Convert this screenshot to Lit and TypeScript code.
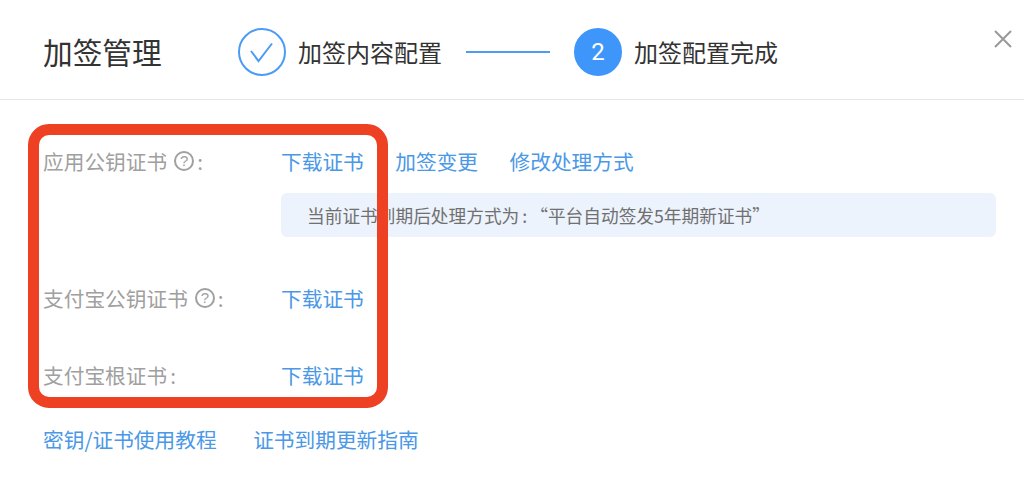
import { LitElement, html, css } from "lit";
import { customElement } from "lit/decorators.js";

@customElement("app-root")
export class AppRoot extends LitElement {
  static styles = css`
    :host {
      display: block;
      position: relative;
      width: 1024px;
      height: 504px;
      overflow: hidden;
      background: #fff;
      font-family: "Noto Sans CJK SC", "Liberation Sans", sans-serif;
      color: #333;
    }
    .header {
      box-sizing: border-box;
      height: 100px;
      border-bottom: 1px solid #e8e8e8;
      display: flex;
      align-items: center;
      padding: 5px 12px 0 43px;
    }
    .title {
      width: 195px;
      font-size: 29.7px;
      line-height: 38px;
      color: #333;
    }
    .step {
      display: flex;
      align-items: center;
      gap: 12px;
      font-size: 24px;
      line-height: 34px;
    }
    .circle {
      box-sizing: border-box;
      width: 48px;
      height: 48px;
      border-radius: 50%;
      border: 2px solid #4c9bf5;
      display: flex;
      align-items: center;
      justify-content: center;
    }
    .circle.on {
      background: #3f96fa;
      border-color: #3f96fa;
      color: #fff;
      font-family: "Roboto", sans-serif;
      font-size: 24px;
    }
    .line {
      width: 84px;
      height: 2px;
      background: #4c9bf5;
      margin: 0 24px 0 24px;
    }
    .close {
      margin-left: auto;
      align-self: flex-start;
      margin-top: 25px;
      display: block;
    }
    .body {
      padding: 45px 28px 0 43px;
    }
    .row {
      display: grid;
      grid-template-columns: 238px 1fr;
      font-size: 20.7px;
      line-height: 32px;
    }
    .row + .row {
      margin-top: 45px;
    }
    .row.second {
      margin-top: 45px;
    }
    .label {
      color: #a0a0a0;
      display: flex;
      align-items: center;
    }
    .q {
      box-sizing: border-box;
      width: 20px;
      height: 20px;
      margin: 0 0 0 7px;
      border: 2px solid #a0a0a0;
      border-radius: 50%;
      font-size: 15px;
      line-height: 16px;
      text-align: center;
      font-family: "Liberation Sans", sans-serif;
    }
    .colon {
      margin-left: 3px;
    }
    .links {
      display: flex;
      gap: 31.5px;
    }
    a {
      color: #4a98e6;
      text-decoration: none;
    }
    .notice {
      box-sizing: border-box;
      grid-column: 2;
      height: 44px;
      margin-top: 16px;
      padding-left: 26px;
      border-radius: 6px;
      background: #ecf3fd;
      color: #707070;
      font-size: 17.7px;
      line-height: 44px;
      white-space: nowrap;
    }
    .sep {
      margin: 0 3px;
    }
    .footer {
      display: flex;
      gap: 36.5px;
      margin-top: 32px;
      font-size: 20.7px;
      line-height: 32px;
    }
    .mark {
      position: absolute;
      box-sizing: border-box;
      left: 28px;
      top: 124px;
      width: 360px;
      height: 284px;
      border: 11px solid #ee4023;
      border-radius: 21px;
      pointer-events: none;
    }
  `;

  render() {
    return html`
      <div class="header">
        <div class="title">加签管理</div>
        <div class="step">
          <span class="circle">
            <svg width="26" height="22" viewBox="0 0 26 22" fill="none" stroke="#4c9bf5" stroke-width="2">
              <path d="M2 10 L9.5 20 L23 2.5" />
            </svg>
          </span>
          加签内容配置
        </div>
        <div class="line"></div>
        <div class="step">
          <span class="circle on">2</span>
          加签配置完成
        </div>
        <svg class="close" width="18" height="18" viewBox="0 0 18 18" stroke="#999" stroke-width="2" fill="none">
          <path d="M1 1 L17 17 M17 1 L1 17" />
        </svg>
      </div>
      <div class="body">
        <div class="row">
          <div class="label">应用公钥证书<span class="q">?</span><span class="colon">:</span></div>
          <div class="links">
            <a>下载证书</a><a>加签变更</a><a>修改处理方式</a>
          </div>
          <div class="notice">当前证书到期后处理方式为<span class="sep">:</span>“平台自动签发5年期新证书”</div>
        </div>
        <div class="row second">
          <div class="label">支付宝公钥证书<span class="q">?</span><span class="colon">:</span></div>
          <div class="links"><a>下载证书</a></div>
        </div>
        <div class="row">
          <div class="label">支付宝根证书<span class="colon">:</span></div>
          <div class="links"><a>下载证书</a></div>
        </div>
        <div class="footer">
          <a>密钥/证书使用教程</a><a>证书到期更新指南</a>
        </div>
      </div>
      <div class="mark"></div>
    `;
  }
}
